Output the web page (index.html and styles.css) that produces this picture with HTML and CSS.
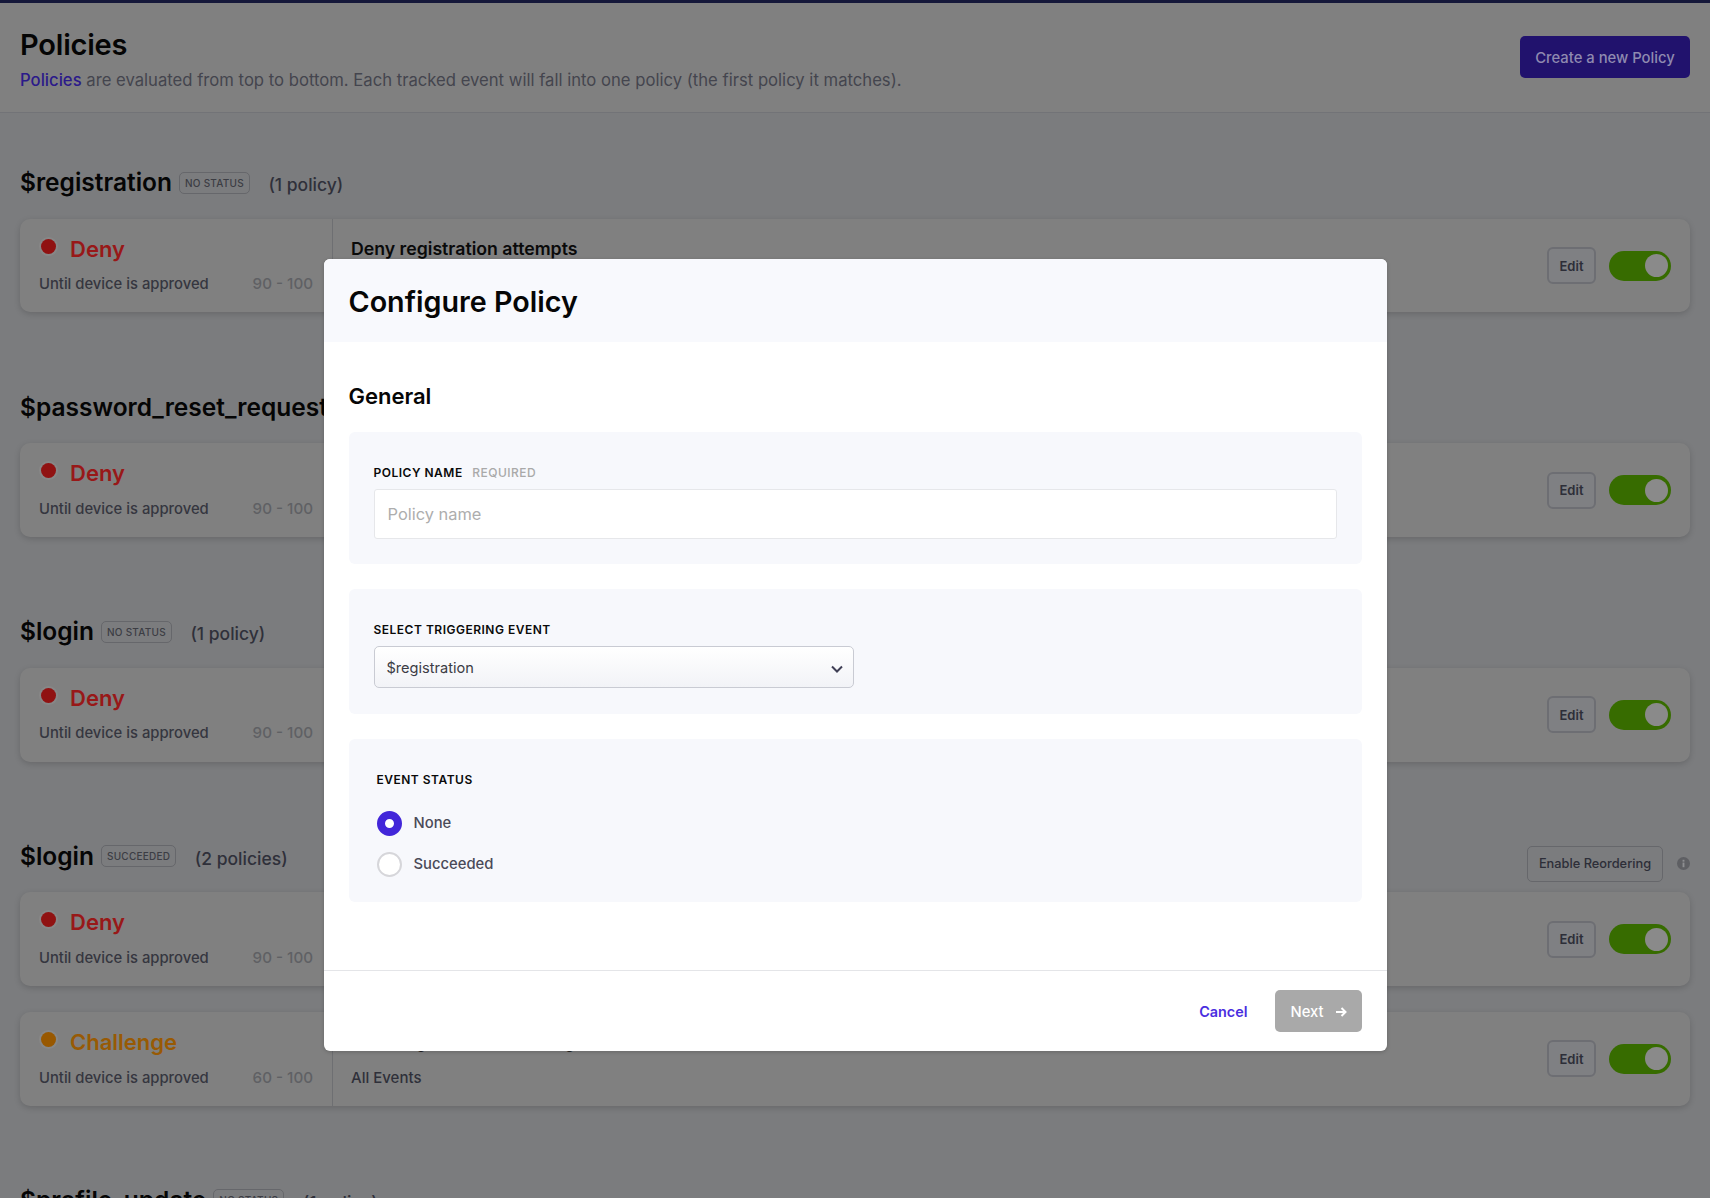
FILE: index.html
```html
<!DOCTYPE html>
<html lang="en">
<head>
<meta charset="utf-8">
<title>Policies</title>
<link rel="stylesheet" href="styles.css">
</head>
<body>
<div class="page">
  <header class="page-header">
    <div>
      <h1 class="page-title">Policies</h1>
      <p class="page-sub"><a class="page-link">Policies</a> are evaluated from top to bottom. Each tracked event will fall into one policy (the first policy it matches).</p>
    </div>
    <button class="btn-create">Create a new Policy</button>
  </header>
  <main class="content">
    <section class="group">
      <div class="group-head">
        <h2 class="event-name">$registration</h2><span class="badge">No status</span><span class="count">(1 policy)</span>
      </div>
      <article class="card">
        <div class="card-left">
          <div class="verdict"><span class="dot dot-red"></span><span class="verdict-red">Deny</span></div>
          <div class="meta"><span>Until device is approved</span><span class="range">90 - 100</span></div>
        </div>
        <div class="card-main"><div class="card-title">Deny registration attempts</div><div class="card-events">All Events</div></div>
        <div class="card-actions"><button class="btn-edit">Edit</button><span class="toggle"><span class="knob"></span></span></div>
      </article>
    </section>
    <section class="group">
      <div class="group-head">
        <h2 class="event-name">$password_reset_request</h2><span class="badge">No status</span><span class="count">(1 policy)</span>
      </div>
      <article class="card">
        <div class="card-left">
          <div class="verdict"><span class="dot dot-red"></span><span class="verdict-red">Deny</span></div>
          <div class="meta"><span>Until device is approved</span><span class="range">90 - 100</span></div>
        </div>
        <div class="card-main"><div class="card-title">Deny password reset attempts</div><div class="card-events">All Events</div></div>
        <div class="card-actions"><button class="btn-edit">Edit</button><span class="toggle"><span class="knob"></span></span></div>
      </article>
    </section>
    <section class="group">
      <div class="group-head">
        <h2 class="event-name">$login</h2><span class="badge">No status</span><span class="count">(1 policy)</span>
      </div>
      <article class="card">
        <div class="card-left">
          <div class="verdict"><span class="dot dot-red"></span><span class="verdict-red">Deny</span></div>
          <div class="meta"><span>Until device is approved</span><span class="range">90 - 100</span></div>
        </div>
        <div class="card-main"><div class="card-title">Deny login attempts</div><div class="card-events">All Events</div></div>
        <div class="card-actions"><button class="btn-edit">Edit</button><span class="toggle"><span class="knob"></span></span></div>
      </article>
    </section>
    <section class="group">
      <div class="group-head">
        <h2 class="event-name">$login</h2><span class="badge">Succeeded</span><span class="count">(2 policies)</span>
        <div class="reorder">
          <button class="btn-reorder">Enable Reordering</button>
          <svg class="info" viewBox="0 0 14 14" aria-hidden="true"><circle cx="7" cy="7" r="7" fill="#5e5f63"/><rect x="6" y="6" width="2" height="5" fill="#8d8e91"/><rect x="6" y="3" width="2" height="2" fill="#8d8e91"/></svg>
        </div>
      </div>
      <div class="stack">
        <article class="card">
          <div class="card-left">
            <div class="verdict"><span class="dot dot-red"></span><span class="verdict-red">Deny</span></div>
            <div class="meta"><span>Until device is approved</span><span class="range">90 - 100</span></div>
          </div>
          <div class="card-main"><div class="card-title">Deny risky logins</div><div class="card-events">All Events</div></div>
          <div class="card-actions"><button class="btn-edit">Edit</button><span class="toggle"><span class="knob"></span></span></div>
        </article>
        <article class="card">
          <div class="card-left">
            <div class="verdict"><span class="dot dot-orange"></span><span class="verdict-orange">Challenge</span></div>
            <div class="meta"><span>Until device is approved</span><span class="range">60 - 100</span></div>
          </div>
          <div class="card-main"><div class="card-title">Challenge all unknown logins</div><div class="card-events">All Events</div></div>
          <div class="card-actions"><button class="btn-edit">Edit</button><span class="toggle"><span class="knob"></span></span></div>
        </article>
      </div>
    </section>
    <section class="group">
      <div class="group-head">
        <h2 class="event-name">$profile_update</h2><span class="badge">No status</span><span class="count">(1 policy)</span>
      </div>
    </section>
  </main>
</div>

<div class="modal" role="dialog">
  <div class="modal-head"><h2 class="modal-title">Configure Policy</h2></div>
  <div class="modal-body">
    <h3 class="modal-section">General</h3>
    <div class="panels">
      <div class="panel panel-name">
        <div class="label">Policy name <span class="label-note">Required</span></div>
        <input class="text-input" type="text" placeholder="Policy name">
      </div>
      <div class="panel panel-event">
        <div class="label">Select triggering event</div>
        <div class="select">
          <span class="select-value">$registration</span>
          <svg class="chevron" viewBox="0 0 14 10" aria-hidden="true"><path d="M2 2.5 7 7.5 12 2.5" fill="none" stroke="#3f3f55" stroke-width="2"/></svg>
        </div>
      </div>
      <div class="panel panel-status">
        <div class="label label-status">Event status</div>
        <div class="radios">
          <div class="radio-row"><span class="radio radio-on"></span><span class="radio-label">None</span></div>
          <div class="radio-row"><span class="radio"></span><span class="radio-label">Succeeded</span></div>
        </div>
      </div>
    </div>
  </div>
  <div class="modal-foot">
    <a class="btn-cancel">Cancel</a>
    <button class="btn-next">Next
      <svg class="arrow" viewBox="0 0 12 12" aria-hidden="true"><path d="M1 6H10.5M6.5 2 10.5 6 6.5 10" fill="none" stroke="#fff" stroke-width="2"/></svg>
    </button>
  </div>
</div>
</body>
</html>
```
FILE: styles.css
```css
* { box-sizing: border-box; }
html, body { margin: 0; height: 100%; }
body {
  height: 1198px;
  overflow: hidden;
  position: relative;
  background: #7b7c7e;
  font-family: Inter, "Liberation Sans", sans-serif;
  color: #000;
}
button { font-family: inherit; cursor: pointer; }
h1, h2, h3, p { margin: 0; }

.page { height: 1198px; overflow: hidden; border-top: 3px solid #15183a; }

.page-header {
  height: 110px;
  padding: 0 20px;
  display: flex;
  justify-content: space-between;
  align-items: flex-start;
  background: #808080;
  border-bottom: 1px solid #727377;
}
.page-title { margin-top: 23px; font-size: 29px; line-height: 38px; font-weight: 600; color: #050505; letter-spacing: -0.2px; }
.page-sub { margin-top: 4px; font-size: 16.67px; line-height: 24px; color: #44454e; }
.page-link { color: #2b1a8a; font-weight: 500; }
.btn-create {
  margin-top: 33px;
  width: 170px;
  height: 42px;
  padding: 2px 0 0;
  border: 0;
  border-radius: 5px;
  background: #21126d;
  color: #8f8ab0;
  font-size: 14.8px;
  font-weight: 500;
}

.content { padding: 51px 20px 0; }
.group { margin-bottom: 76.2px; }
.group-head { height: 37px; margin-bottom: 17.7px; display: flex; align-items: center; }
.event-name { font-size: 24.5px; line-height: 37px; font-weight: 600; color: #050505; }
.badge {
  margin-left: 7px;
  height: 22px;
  padding: 0 5px;
  display: flex;
  align-items: center;
  border: 1px solid #66676b;
  border-radius: 5px;
  font-size: 10px;
  letter-spacing: 0.25px;
  text-transform: uppercase;
  color: #3c3d44;
  font-weight: 500;
}
.count { margin-left: 18.5px; margin-top: 4px; font-size: 17.5px; font-weight: 500; color: #2f303a; }
.reorder { margin-left: auto; align-self: flex-start; margin-top: 8px; display: flex; align-items: center; }
.btn-reorder {
  width: 136px;
  height: 36px;
  border: 1px solid #66676b;
  border-radius: 5px;
  background: transparent;
  color: #2d2e38;
  font-size: 12.8px;
  font-weight: 500;
  padding: 0;
}
.info { width: 13px; height: 13px; margin-left: 14px; }

.stack { display: flex; flex-direction: column; gap: 26px; }
.card {
  height: 93.7px;
  display: flex;
  background: #808080;
  border-radius: 10px;
  box-shadow: 0 2px 6px rgba(0, 0, 0, 0.16);
}
.card-left { width: 313px; padding: 17px 0 0 19px; border-right: 1px solid #6e6f72; }
.verdict { height: 26px; display: flex; align-items: center; gap: 14px; font-size: 22px; font-weight: 600; }
.dot { width: 15px; height: 15px; margin: -5px 0 0 2px; border-radius: 50%; box-shadow: 0 0 0 2px rgba(255, 255, 255, 0.06); }
.dot-red { background: #901212; }
.dot-orange { background: #985800; }
.verdict-red { color: #981818; }
.verdict-orange { color: #985a04; }
.meta { margin-top: 12.6px; width: 274px; display: flex; justify-content: space-between; font-size: 14.8px; line-height: 20px; font-weight: 500; color: #35363f; }
.range { color: #5f6064; font-size: 15.2px; }
.card-main { flex: 1; padding: 17px 0 0 18px; }
.card-title { font-size: 17.7px; line-height: 26px; font-weight: 600; color: #0a0a0a; }
.card-events { margin-top: 12.6px; font-size: 15px; line-height: 20px; font-weight: 500; color: #2f303a; }
.card-actions { display: flex; align-items: center; gap: 13px; padding-right: 19px; }
.btn-edit {
  width: 49px;
  height: 37px;
  padding: 0;
  border: 2px solid #6d6e73;
  border-radius: 6px;
  background: #7f8083;
  color: #2d2e38;
  font-size: 13px;
  font-weight: 600;
}
.toggle { width: 62px; height: 30px; padding: 3.5px 3px; display: flex; justify-content: flex-end; border-radius: 15px; background: #376c00; }
.knob { width: 23px; height: 23px; border-radius: 50%; background: #8a8a8a; }

.modal {
  position: absolute;
  left: 323.5px;
  top: 259px;
  width: 1063px;
  height: 792px;
  display: flex;
  flex-direction: column;
  background: #fff;
  border-radius: 6px;
  overflow: hidden;
  box-shadow: 0 1px 4px rgba(0, 0, 0, 0.2);
}
.modal-head { height: 83px; padding: 2px 25px 0; display: flex; align-items: center; background: #f8f9fd; }
.modal-title { font-size: 28.7px; line-height: 40px; font-weight: 600; color: #060606; }
.modal-body { flex: 1; padding: 40px 25px 0; }
.modal-section { font-size: 22px; line-height: 28px; font-weight: 600; color: #060606; }
.panels { margin-top: 22px; display: flex; flex-direction: column; gap: 25px; }
.panel { background: #f7f8fc; border-radius: 6px; padding: 33px 25px 25px; }
.panel-event { padding-bottom: 26px; }
.panel-status { padding: 33px 25px 25px 28px; }
.label { font-size: 12px; line-height: 16px; font-weight: 600; letter-spacing: 0.5px; text-transform: uppercase; color: #0a0a0a; margin-bottom: 8px; }
.label-note { margin-left: 6px; color: #a9a9a9; font-weight: 500; }
.label-status { margin-bottom: 23px; }
.text-input {
  display: block;
  width: 100%;
  height: 50px;
  padding: 0 13px;
  border: 1px solid #e6e7ea;
  border-radius: 3px;
  background: #fff;
  font-family: inherit;
  font-size: 16.4px;
  outline: none;
}
.text-input::placeholder { color: #adadad; opacity: 1; }
.select {
  width: 480px;
  height: 42px;
  padding: 0 9px 0 12px;
  display: flex;
  align-items: center;
  justify-content: space-between;
  border: 1px solid #c9cbd3;
  border-radius: 5px;
  background: linear-gradient(#ffffff, #f2f3f7);
  font-size: 14.6px;
  color: #3c3c45;
}
.select-value { padding-top: 1px; }
.chevron { width: 14px; height: 10px; margin-top: 3px; }
.radios { display: flex; flex-direction: column; gap: 16px; }
.radio-row { display: flex; align-items: center; gap: 12px; }
.radio { width: 25px; height: 25px; border-radius: 50%; border: 2px solid #d6d6da; background: #fff; }
.radio-on { border: 8px solid #4226d9; }
.radio-label { padding-bottom: 2px; font-size: 14.8px; font-weight: 500; color: #4a4a58; }
.modal-foot {
  height: 81px;
  padding: 19px 25px 0;
  display: flex;
  align-items: flex-start;
  justify-content: flex-end;
  border-top: 1px solid #e4e5e8;
}
.btn-cancel { margin-right: 27px; line-height: 44px; font-size: 14.4px; font-weight: 600; color: #4a2ee0; }
.btn-next {
  width: 87px;
  height: 42px;
  padding: 2px 0 0 16px;
  display: flex;
  align-items: center;
  gap: 11px;
  border: 0;
  border-radius: 5px;
  background: #a9a9a9;
  color: #fff;
  font-size: 14.8px;
  font-weight: 500;
}
.arrow { width: 12px; height: 12px; }
```
